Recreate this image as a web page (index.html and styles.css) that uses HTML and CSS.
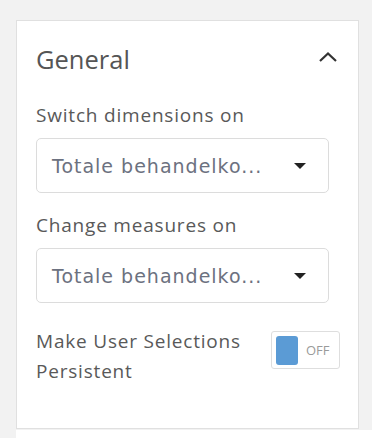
FILE: index.html
```html
<!DOCTYPE html>
<html lang="en">
<head>
  <meta charset="UTF-8" />
  <meta name="viewport" content="width=device-width, initial-scale=1.0" />
  <title>General settings</title>
  <link rel="stylesheet" href="styles.css">
</head>
<body>
  <!-- Settings panel -->
  <section class="panel">
    <header class="panel-head">
      <h2>General</h2>
      <svg class="chevron" width="20" height="12" viewBox="0 0 20 12" aria-hidden="true">
        <path d="M2 10 L10 2.5 L18 10" fill="none" stroke="#333" stroke-width="2.2" />
      </svg>
    </header>

    <div class="field">
      <label>Switch dimensions on</label>
      <div class="select">
        <span class="value">Totale behandelko...</span>
        <span class="caret"></span>
      </div>
    </div>

    <div class="field">
      <label>Change measures on</label>
      <div class="select">
        <span class="value">Totale behandelko...</span>
        <span class="caret"></span>
      </div>
    </div>

    <div class="toggle-row">
      <span class="toggle-label">Make User Selections Persistent</span>
      <div class="toggle">
        <span class="knob"></span>
        <span class="state">OFF</span>
      </div>
    </div>
  </section>
  <div class="next-panel"></div>
</body>
</html>
```

FILE: styles.css
```css
/* ===== Base ===== */
* { box-sizing: border-box; margin: 0; padding: 0; }
body {
  background: #f2f2f2;
  font-family: "Open Sans", "Noto Sans", sans-serif;
  color: #595959;
  width: 372px;
  height: 438px;
  overflow: hidden;
}

/* ===== Panel ===== */
.panel {
  margin: 20px 0 0 16px;
  width: 343px;
  height: 409px;
  background: #fff;
  border: 1px solid #e0e0e0;
  padding: 0 28px 0 19px;
}
.panel-head {
  display: flex;
  justify-content: space-between;
  align-items: center;
  height: 74px;
  padding-top: 2px;
}
.panel-head h2 {
  font-size: 25.5px;
  font-weight: 400;
  color: #555;
}
.chevron { margin-right: -8px; margin-top: -4px; }

/* ===== Fields ===== */
.field { display: flex; flex-direction: column; }
.field label {
  font-size: 19px;
  letter-spacing: 0.8px;
  line-height: 40px;
  height: 43px;
  color: #595959;
}
.select {
  display: flex;
  align-items: center;
  justify-content: space-between;
  width: 293px;
  height: 55px;
  border: 1px solid #dcdcdc;
  border-radius: 5px;
  padding: 0 22px 0 15px;
  margin-bottom: 12px;
}
.value {
  font-family: "DejaVu Sans", sans-serif;
  font-size: 19px;
  letter-spacing: 1px;
  color: #6c7180;
}
.caret {
  width: 0;
  height: 0;
  border-left: 6px solid transparent;
  border-right: 6px solid transparent;
  border-top: 6px solid #222;
}

/* ===== Toggle ===== */
.toggle-row {
  display: flex;
  justify-content: space-between;
  align-items: flex-start;
  padding-top: 11px;
}
.toggle-label {
  width: 232px;
  font-size: 19px;
  letter-spacing: 0.8px;
  line-height: 30px;
}
.toggle {
  display: flex;
  align-items: center;
  gap: 8px;
  width: 69px;
  height: 38px;
  margin: 5px -10px 0 0;
  padding: 0 4px;
  border: 1px solid #dedede;
  border-radius: 3px;
}
.knob {
  width: 22px;
  height: 29px;
  background: #5b9bd5;
  border-radius: 3px;
}
.state {
  font-size: 13px;
  color: #9a9a9a;
}

.next-panel {
  margin: 1px 0 0 16px;
  height: 20px;
  background: #fff;
}
```
